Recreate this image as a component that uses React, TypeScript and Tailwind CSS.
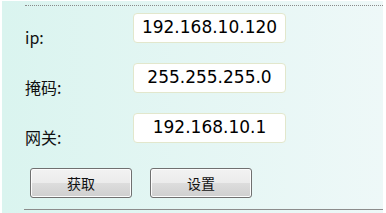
import React from "react";

const rows = [
  { label: "ip:", value: "192.168.10.120" },
  { label: "掩码:", value: "255.255.255.0" },
  { label: "网关:", value: "192.168.10.1" },
];

function Btn({ children }: { children: React.ReactNode }) {
  return (
    <button
      className="w-[102px] h-[30px] rounded-[3px] border border-[#707070] bg-[linear-gradient(to_bottom,#f2f2f2_0%,#ebebeb_50%,#dddddd_50%,#cfcfcf_100%)] shadow-[inset_0_0_0_1px_#fcfcfc] text-[14px] text-[#111] flex items-center justify-center"
      style={{ fontFamily: '"Noto Sans CJK SC", sans-serif' }}
    >
      {children}
    </button>
  );
}

export default function App() {
  return (
    <div className="w-[386px] h-[213px] bg-white pt-[1px] pl-[2px] pr-[3px] overflow-hidden">
      <div className="h-[212px] bg-gradient-to-r from-[#daf4ef] to-[#eef8f8] flex flex-col">
        <div className="mt-[4px] ml-[23px] border-t border-dotted border-[#8a8a8a]" />
        <div className="mt-[7px] ml-[23px] flex flex-col gap-[20px]">
          {rows.map((r) => (
            <div key={r.label} className="flex h-[30px]">
              <div
                className="w-[108px] mt-[14px] leading-[20px] text-[16px] text-[#111]"
                style={{ fontFamily: '"Noto Sans CJK SC", sans-serif' }}
              >
                {r.label}
              </div>
              <div
                className="w-[153px] h-[30px] rounded-[4px] border border-[#e2e7cc] bg-white flex items-center justify-center text-[17px] text-black"
                style={{ fontFamily: '"DejaVu Sans", sans-serif' }}
              >
                {r.value}
              </div>
            </div>
          ))}
        </div>
        <div className="mt-[25px] ml-[28px] flex gap-[18px]">
          <Btn>获取</Btn>
          <Btn>设置</Btn>
        </div>
        <div className="mt-[11px] ml-[22px] h-[1px] bg-[#8c8c8c]" />
      </div>
    </div>
  );
}
